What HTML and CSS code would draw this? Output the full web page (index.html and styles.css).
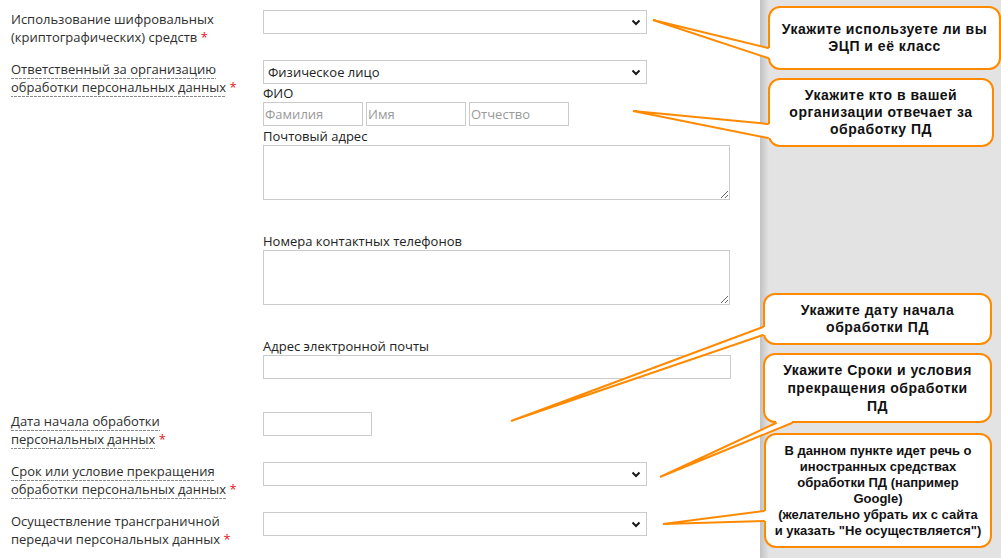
FILE: index.html
```html
<!DOCTYPE html>
<html lang="ru">
<head>
    <meta charset="UTF-8">
    <title>Персональные данные</title>
    <link rel="stylesheet" href="styles.css">
</head>
<body>
    <div class="page">
        <form class="form">
            <div class="row">
                <div class="label">Использование шифровальных<br>(криптографических) средств <span class="req">*</span></div>
                <div class="field">
                    <div class="select-wrap">
                        <select class="control select"><option></option></select>
                        <svg class="chevron" width="10" height="7" viewBox="0 0 10 7"><path d="M1.5 1.5l3.5 3.5 3.5-3.5" fill="none" stroke="#1a1a1a" stroke-width="2"/></svg>
                    </div>
                </div>
            </div>

            <div class="row row-group">
                <div class="label"><span class="hint">Ответственный за организацию<br>обработки персональных данных</span> <span class="req">*</span></div>
                <div class="field">
                    <div class="select-wrap">
                        <select class="control select"><option>Физическое лицо</option></select>
                        <svg class="chevron" width="10" height="7" viewBox="0 0 10 7"><path d="M1.5 1.5l3.5 3.5 3.5-3.5" fill="none" stroke="#1a1a1a" stroke-width="2"/></svg>
                    </div>
                    <div class="sub-label sub-fio">ФИО</div>
                    <div class="name-row">
                        <input class="control name" type="text" placeholder="Фамилия">
                        <input class="control name" type="text" placeholder="Имя">
                        <input class="control name" type="text" placeholder="Отчество">
                    </div>
                    <div class="sub-label sub-first">Почтовый адрес</div>
                    <textarea class="control area"></textarea>
                    <div class="sub-label">Номера контактных телефонов</div>
                    <textarea class="control area"></textarea>
                    <div class="sub-label">Адрес электронной почты</div>
                    <input class="control wide" type="text">
                </div>
            </div>

            <div class="row">
                <div class="label"><span class="hint">Дата начала обработки<br>персональных данных</span> <span class="req">*</span></div>
                <div class="field"><input class="control date" type="text"></div>
            </div>

            <div class="row">
                <div class="label"><span class="hint">Срок или условие прекращения<br>обработки персональных данных</span> <span class="req">*</span></div>
                <div class="field">
                    <div class="select-wrap">
                        <select class="control select"><option></option></select>
                        <svg class="chevron" width="10" height="7" viewBox="0 0 10 7"><path d="M1.5 1.5l3.5 3.5 3.5-3.5" fill="none" stroke="#1a1a1a" stroke-width="2"/></svg>
                    </div>
                </div>
            </div>

            <div class="row">
                <div class="label">Осуществление трансграничной<br>передачи персональных данных <span class="req">*</span></div>
                <div class="field">
                    <div class="select-wrap">
                        <select class="control select"><option></option></select>
                        <svg class="chevron" width="10" height="7" viewBox="0 0 10 7"><path d="M1.5 1.5l3.5 3.5 3.5-3.5" fill="none" stroke="#1a1a1a" stroke-width="2"/></svg>
                    </div>
                </div>
            </div>
        </form>

        <div class="sidebar"></div>

        <!-- callouts over the form -->
        <div class="callout callout-1">Укажите используете ли вы<br>ЭЦП и её класс</div>
        <div class="callout callout-2">Укажите кто в вашей<br>организации отвечает за<br>обработку ПД</div>
        <div class="callout callout-3">Укажите дату начала<br>обработки ПД</div>
        <div class="callout callout-4">Укажите Сроки и условия<br>прекращения обработки<br>ПД</div>
        <div class="callout callout-5">В данном пункте идет речь о<br>иностранных средствах<br>обработки ПД (например<br>Google)<br>(желательно убрать их с сайта<br>и указать "Не осуществляется")</div>

        <svg class="pointers" width="1001" height="558" viewBox="0 0 1001 558">
            <g fill="#fff" stroke="none">
                <polygon points="653,20 768,48 772,48 772,58 768,58"/>
                <polygon points="633,111 768,124 772,124 772,138 768,138"/>
                <polygon points="511,421 763,327 767,327 767,335 763,335"/>
                <polygon points="660,477 776,423 776,419 792,419 792,423"/>
                <polygon points="663,524 764,511 768,511 768,521 764,521"/>
            </g>
            <g fill="none" stroke="#ff8a00" stroke-width="2" stroke-linecap="round">
                <polyline points="768,48 653,20 768,58"/>
                <polyline points="768,124 633,111 768,138"/>
                <polyline points="763,327 511,421 763,335"/>
                <polyline points="776,423 660,477 792,423"/>
                <polyline points="764,511 663,524 764,521"/>
            </g>
        </svg>
    </div>
</body>
</html>
```

FILE: styles.css
```css
body {
    margin: 0;
    font-family: "Open Sans", sans-serif;
    font-size: 13px;
    color: #2e2e2e;
    background-color: #ffffff;
}

.page {
    position: relative;
    display: flex;
    height: 558px;
    overflow: hidden;
}

.form {
    width: 760px;
    padding: 10px 0 0 11px;
    box-sizing: border-box;
}

.sidebar {
    flex: 1;
    background: linear-gradient(to right, #c2c2c2, #e3e3e3 9px);
}

.row {
    display: grid;
    grid-template-columns: 252px 1fr;
    margin-bottom: 14px;
}

.label {
    line-height: 18px;
}

.hint {
    background: linear-gradient(to right, #8a8a8a 3px, transparent 3px) repeat-x left bottom / 4px 1px;
    padding-bottom: 1px;
}

.req {
    color: #e8141a;
}

.control {
    display: block;
    box-sizing: border-box;
    height: 24px;
    margin: 0;
    border: 1px solid #cbcbcb;
    border-radius: 0;
    background-color: #ffffff;
    font-family: "Open Sans", sans-serif;
    font-size: 13px;
    color: #222222;
    outline: none;
}

.control::placeholder {
    color: #9a9a9a;
}

.select-wrap {
    position: relative;
    width: 384px;
}

.select {
    width: 100%;
    padding: 0 4px;
    appearance: none;
    -webkit-appearance: none;
}

.chevron {
    position: absolute;
    right: 6px;
    top: 9px;
    pointer-events: none;
}

.sub-label {
    line-height: 17px;
    margin-top: 33px;
    color: #222222;
}

.sub-fio {
    margin-top: 1px;
}

.sub-first {
    margin-top: 2px;
}

.name-row {
    display: flex;
    gap: 3px;
}

.name {
    width: 100px;
    padding: 0 1px;
}

.area {
    width: 467px;
    height: 55px;
}

.wide {
    width: 468px;
    margin-bottom: 19px;
}

.date {
    width: 109px;
}

.callout {
    position: absolute;
    box-sizing: border-box;
    display: flex;
    align-items: center;
    justify-content: center;
    text-align: center;
    background-color: #ffffff;
    border: 2px solid #ff8a00;
    border-radius: 12px;
    font-family: "Liberation Sans", Arial, sans-serif;
    font-weight: bold;
    font-size: 14px;
    letter-spacing: 0.5px;
    line-height: 17px;
    color: #111111;
}

.callout-1 {
    left: 768px;
    top: 6px;
    width: 233px;
    height: 64px;
}

.callout-2 {
    left: 768px;
    top: 78px;
    width: 226px;
    height: 69px;
}

.callout-3 {
    left: 763px;
    top: 293px;
    width: 229px;
    height: 52px;
}

.callout-4 {
    left: 763px;
    top: 353px;
    width: 229px;
    height: 70px;
    line-height: 18px;
}

.callout-5 {
    left: 764px;
    top: 433px;
    width: 228px;
    height: 115px;
    font-size: 13px;
    letter-spacing: 0;
    line-height: 16px;
}

.pointers {
    position: absolute;
    left: 0;
    top: 0;
    pointer-events: none;
}
```
